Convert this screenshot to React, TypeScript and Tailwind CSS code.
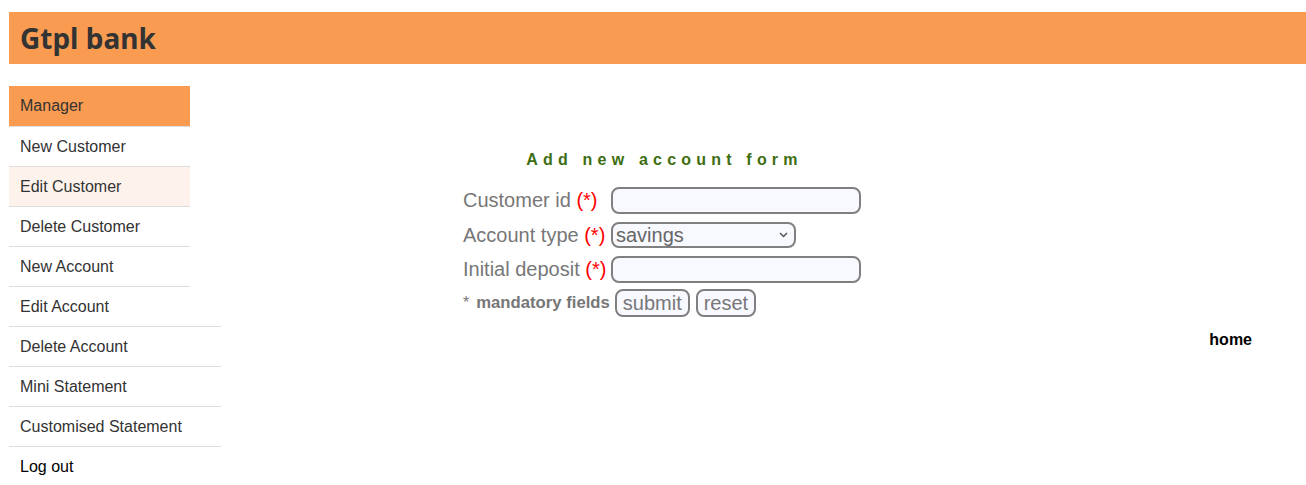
import React from "react";

const items = [
  { label: "New Customer", bg: "", wide: false },
  { label: "Edit Customer", bg: "bg-[#fdf3ec]", wide: false },
  { label: "Delete Customer", bg: "", wide: false },
  { label: "New Account", bg: "", wide: false },
  { label: "Edit Account", bg: "", wide: false },
  { label: "Delete Account", bg: "", wide: true },
  { label: "Mini Statement", bg: "", wide: true },
  { label: "Customised Statement", bg: "", wide: true },
];

function Req() {
  return <span className="text-[#ff0000]">(*)</span>;
}

export default function App() {
  return (
    <div className="min-h-[485px] bg-white pt-[12px] pl-[9px] font-['Liberation_Sans',Arial,sans-serif]">
      <header className="h-[52px] bg-[#f99c52] flex items-center pl-[11px]">
        <h1 className="text-[28px] font-bold text-[#333] font-['Noto_Sans',sans-serif] leading-none -mt-[1px]">
          Gtpl bank
        </h1>
      </header>
      <div className="flex">
        <nav className="w-[212px] shrink-0 pt-[22px]">
          <div className="w-[181px] h-[40px] bg-[#f99c52] text-[#333] text-[16px] flex items-center pl-[11px]">
            Manager
          </div>
          {items.map((it) => (
            <div
              key={it.label}
              className={`${it.wide ? "w-[212px]" : "w-[181px]"} h-[40px] border-t border-[#dddddd] text-[#333] text-[16px] flex items-center pl-[11px] ${it.bg}`}
            >
              {it.label}
            </div>
          ))}
          <div className="w-[212px] h-[40px] border-t border-[#dddddd] text-black text-[16px] flex items-center pl-[11px]">
            Log out
          </div>
        </nav>
        <main className="flex-1 pt-[86px]">
          <div className="ml-[242px] w-[398px]">
            <h2 className="text-center text-[16px] font-bold text-[#3e6e12] tracking-[5.2px] leading-[20px] pl-[5px]">
              Add new account form
            </h2>
            <div className="mt-[17px] grid grid-cols-[148px_auto] gap-y-[8px] items-center text-[20px] text-[#777] leading-[23px]">
              <div>
                Customer id <Req />
              </div>
              <input className="w-[250px] h-[27px] rounded-[8px] border-2 border-[#808080] bg-[#f8f8ff] outline-none" />
              <div className="whitespace-nowrap">
                Account type <Req />
              </div>
              <div className="relative w-[185px] h-[26px] rounded-[8px] border-2 border-[#808080] bg-[#f8f8ff] flex items-center pl-[3px] text-[#666]">
                savings
                <svg className="absolute right-[6px] top-[8px]" width="9" height="6" viewBox="0 0 9 6">
                  <path d="M1 1l3.5 3.5L8 1" stroke="#555" strokeWidth="1.5" fill="none" />
                </svg>
              </div>
              <div className="whitespace-nowrap">
                Initial deposit <Req />
              </div>
              <input className="w-[250px] h-[27px] rounded-[8px] border-2 border-[#808080] bg-[#f8f8ff] outline-none" />
            </div>
            <div className="mt-[6px] flex items-center text-[#777] whitespace-nowrap">
              <span className="text-[16px]">*</span>
              <span className="ml-[7px] text-[16.7px] font-bold">mandatory fields</span>
              <button className="ml-[5px] h-[28px] px-[6px] rounded-[8px] border-2 border-[#808080] bg-[#f8f8ff] text-[20px] leading-none text-[#777]">
                submit
              </button>
              <button className="ml-[6px] h-[28px] px-[6px] rounded-[8px] border-2 border-[#808080] bg-[#f8f8ff] text-[20px] leading-none text-[#777]">
                reset
              </button>
            </div>
          </div>
          <div className="flex justify-end pr-[54px] mt-[11px]">
            <span className="font-bold text-[16px] text-black">home</span>
          </div>
        </main>
      </div>
    </div>
  );
}
